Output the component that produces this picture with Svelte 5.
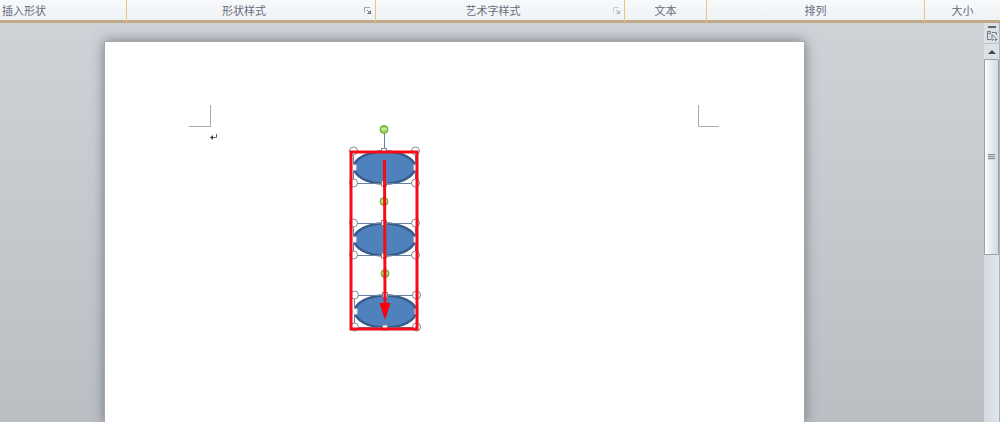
<script>
  const groups = [
    { name: '插入形状', size: 126, start: true },
    { name: '形状样式', size: 249, launcher: true },
    { name: '艺术字样式', size: 249, launcher: true, disabled: true },
    { name: '文本', size: 82 },
    { name: '排列', size: 218 },
    { name: '大小', size: 76 }
  ];

  const columns = groups.map((g) => `${g.size}fr`).join(' ');

  // selected ovals: top left corner of each bounding box, in page coordinates
  const ovals = [
    { x: 248, y: 109 },
    { x: 248, y: 181 },
    { x: 249, y: 253 }
  ];
  const w = 62;
  const h = 33;
</script>

<div class="window">
  <header class="ribbon" style:grid-template-columns={columns}>
    {#each groups as group}
      <div class="group" class:start={group.start}>
        <span class="label">{group.name}</span>
        {#if group.launcher}
          <button class="launcher" disabled={group.disabled} aria-label={group.name}>
            <svg width="8" height="8" viewBox="0 0 8 8">
              <path d="M0.5 5.5V0.5H6" fill="none" stroke="#a3a7af" />
              <path d="M3 3L5 5" stroke="#777c87" />
              <path d="M7 3V7H3Z" fill="#777c87" />
            </svg>
          </button>
        {/if}
      </div>
    {/each}
  </header>

  <div class="workspace">
    <main class="desk">
      <article class="page">
        <svg class="drawing" width="699" height="380" viewBox="0 0 699 380">
          <g fill="none" stroke="#a9a9a9">
            <path d="M105.5 63V84.5H84" />
            <path d="M593.5 63V84.5H614" />
          </g>
          <path d="M111.5 92V95.5H107" fill="none" stroke="#666" />
          <path d="M105 95.5L108 93V98Z" fill="#444" />

          {#each ovals as o}
            <ellipse cx={o.x + w / 2 + 0.5} cy={o.y + h / 2} rx="30.5" ry="16" fill="#4f81bd" stroke="#385d8a" stroke-width="2.5" />
            <g stroke="#6483a3" fill="none">
              <rect x={o.x + 0.5} y={o.y + 0.5} width={w} height={h - 1} />
              <path d="M{o.x + 31.5} {o.y}V{o.y - 18}" />
            </g>
            <circle cx={o.x + 31} cy={o.y - 21.5} r="4" fill="#9bdc4c" stroke="#73944c" />
            <path d="M{o.x + 28.5} {o.y - 22}h5" stroke="#c5ef95" stroke-width="2" />
            <g fill="#fff" stroke="#7b8996">
              {#each [0, w] as dx}
                {#each [0, h - 1] as dy}
                  <circle cx={o.x + dx + 0.5} cy={o.y + dy} r="4" />
                {/each}
                <rect x={o.x + dx - 1} y={o.y + 14} width="4" height="5" stroke="#dce5ef" />
              {/each}
              <rect x={o.x + 28.5} y={o.y - 2.5} width="5" height="5" />
              <rect x={o.x + 28.5} y={o.y + h - 3} width="5" height="5" />
            </g>
          {/each}

          <rect x="246" y="110" width="66" height="177" fill="none" stroke="#f20d18" stroke-width="3" />
          <path d="M279.5 118L280 264" stroke="#f20d18" stroke-width="3" />
          <path d="M274.5 261H285.5L280 278Z" fill="#fa0008" />
        </svg>
      </article>
    </main>

    <aside class="scrollbar">
      <button class="split" aria-label="拆分"></button>
      <button class="ruler" aria-label="标尺">
        <svg width="12" height="12" viewBox="0 0 12 12" fill="none" stroke="#737980">
          <path d="M5 9.5H1.500V1.500H4.500V3.500H1.500M6 2.500H10.500V5" />
          <path d="M6 4.500L11 9.500L9 9.500L10 11.500M6 4.500V10.500L8 9" fill="#eef1f4" />
        </svg>
      </button>
      <button class="up" aria-label="向上">
        <svg width="8" height="4" viewBox="0 0 8 4"><path d="M0 4L4 0L8 4Z" fill="#45494f" /></svg>
      </button>
      <div class="track">
        <div class="thumb">
          <span class="grip"></span>
        </div>
      </div>
    </aside>
  </div>
</div>

<style>
  :global(body) {
    margin: 0;
  }

  .window {
    display: flex;
    flex-direction: column;
    height: 100vh;
    overflow: hidden;
    font-family: "Noto Sans CJK SC", sans-serif;
    font-size: 11px;
    color: #686c7b;
  }

  button {
    display: flex;
    align-items: center;
    justify-content: center;
    padding: 0;
    border: 0;
    background: none;
  }

  .ribbon {
    display: grid;
    flex-shrink: 0;
    height: 20px;
    background: linear-gradient(#f7f9fb, #eff2f5);
    border-bottom: 3px solid #bfaa87;
  }

  .group {
    display: flex;
    align-items: center;
    min-width: 0;
    border-left: 1px solid #edc283;
    box-sizing: border-box;
  }

  .group.start {
    border-left: 0;
    padding-left: 2px;
  }

  .label {
    flex: 1;
    line-height: 20px;
    padding-bottom: 2px;
    text-align: center;
    white-space: nowrap;
  }

  .group.start .label {
    text-align: left;
  }

  .launcher {
    width: 14px;
    height: 12px;
  }

  .launcher:disabled {
    opacity: 0.5;
  }

  .workspace {
    display: flex;
    flex: 1;
    min-height: 0;
  }

  .desk {
    display: flex;
    flex: 1;
    min-width: 0;
    overflow: hidden;
    padding: 19px 24px 0 105px;
    background: linear-gradient(#cfd2d7, #bbbfc4);
  }

  .page {
    flex: 1;
    max-width: 699px;
    background: #fff;
    box-shadow: 0 0 0 1px #a4a8ac, 0 0 12px 1px #777b80;
  }

  .drawing {
    display: block;
  }

  .scrollbar {
    display: flex;
    flex-direction: column;
    width: 16px;
    box-sizing: border-box;
    border-right: 1px solid #aeb3b9;
    background: #dce1e6;
  }

  .split {
    width: 8px;
    height: 2px;
    margin: 3px 4px 0;
    background: #62666b;
  }

  .ruler {
    height: 16px;
    border-bottom: 1px solid #bdc3ca;
  }

  .up {
    height: 15px;
  }

  .track {
    flex: 1;
    background: linear-gradient(90deg, #d4dae0, #e1e6eb);
  }

  .thumb {
    display: flex;
    align-items: center;
    justify-content: center;
    height: 54%;
    box-sizing: border-box;
    border: 1px solid #9ba1a9;
    border-radius: 1px;
    background: linear-gradient(90deg, #fafbfd, #e6ebf0 50%, #d3dae2);
  }

  .grip {
    width: 7px;
    height: 6px;
    background: repeating-linear-gradient(#83878e 0 1px, #d8dce1 1px 2px);
  }
</style>
